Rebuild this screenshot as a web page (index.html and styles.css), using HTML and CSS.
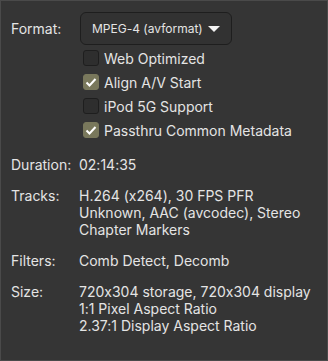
FILE: index.html
```html
<!DOCTYPE html>
<html lang="en">
<head>
    <meta charset="UTF-8">
    <title>Summary</title>
    <link rel="stylesheet" href="styles.css">
</head>
<body>
    <div class="panel">
        <div class="format-row">
            <span class="label">Format:</span>
            <div class="combo">
                <span class="combo-text">MPEG-4 (avformat)</span>
                <svg class="arrow" width="12" height="6" viewBox="0 0 12 6"><path d="M0 0h12L6 6z" fill="#f2f2f2"/></svg>
            </div>
        </div>
        <div class="checks">
            <label class="check"><span class="box"></span>Web Optimized</label>
            <label class="check"><span class="box on"><svg width="12" height="10" viewBox="0 0 12 10"><path d="M1.5 5.5l3 3 6-6.5" fill="none" stroke="#fff" stroke-width="2"/></svg></span>Align A/V Start</label>
            <label class="check"><span class="box"></span>iPod 5G Support</label>
            <label class="check"><span class="box on"><svg width="12" height="10" viewBox="0 0 12 10"><path d="M1.5 5.5l3 3 6-6.5" fill="none" stroke="#fff" stroke-width="2"/></svg></span>Passthru Common Metadata</label>
        </div>
        <div class="info">
            <span class="label">Duration:</span>
            <span>02:14:35</span>
            <span class="label">Tracks:</span>
            <span>H.264 (x264), 30 FPS PFR<br>Unknown, AAC (avcodec), Stereo<br>Chapter Markers</span>
            <span class="label">Filters:</span>
            <span>Comb Detect, Decomb</span>
            <span class="label">Size:</span>
            <span>720x304 storage, 720x304 display<br>1:1 Pixel Aspect Ratio<br>2.37:1 Display Aspect Ratio</span>
        </div>
    </div>
</body>
</html>
```

FILE: styles.css
```css
body {
    margin: 0;
    background: #353535;
    font-family: Inter, sans-serif;
    font-size: 14px;
    font-feature-settings: "calt" 0;
    color: #e4e4e4;
}

.panel {
    box-sizing: border-box;
    width: 328px;
    height: 361px;
    border: 1px solid #4a4a4a;
    padding: 11px 10px 0 10px;
}

.format-row {
    display: flex;
    align-items: center;
    height: 33px;
}

.format-row .label {
    width: 69px;
}

.combo {
    box-sizing: border-box;
    width: 152px;
    height: 33px;
    display: flex;
    align-items: center;
    justify-content: space-between;
    padding: 0 11px 0 11px;
    background: #323232;
    border: 1px solid #1e1e1e;
    border-radius: 6px;
    font-size: 12px;
}

.combo-text {
    white-space: nowrap;
}

.arrow {
    flex-shrink: 0;
}

.checks {
    padding-left: 72px;
    margin-top: 1px;
}

.check {
    display: flex;
    align-items: center;
    height: 24px;
}

.box {
    box-sizing: border-box;
    width: 16px;
    height: 16px;
    margin-right: 5px;
    border-radius: 3px;
    background: #2e2e2e;
    border: 1px solid #1e1e1e;
    display: flex;
    align-items: center;
    justify-content: center;
}

.box.on {
    background: #79785c;
    border-color: #79785c;
}

.info {
    display: grid;
    grid-template-columns: 68px auto;
    row-gap: 14px;
    line-height: 17px;
    margin-top: 14px;
}
```
